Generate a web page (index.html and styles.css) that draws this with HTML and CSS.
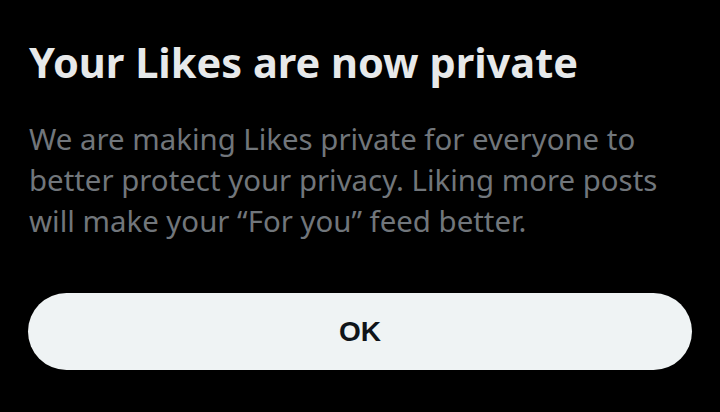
FILE: index.html
```html
<!DOCTYPE html>
<html>
<head>
<meta charset="utf-8">
<link rel="stylesheet" href="styles.css">
</head>
<body>
<div class="sheet">
  <h1 class="title">Your Likes are now private</h1>
  <p class="desc">We are making Likes private for everyone to better protect your privacy. Liking more posts will make your “For you” feed better.</p>
  <button class="ok">OK</button>
</div>
</body>
</html>
```
FILE: styles.css
```css
html, body {
  margin: 0;
  padding: 0;
  background: #000;
  height: 100%;
}
.sheet {
  display: flex;
  flex-direction: column;
  padding: 39px 28px 0 28px;
  font-family: "Noto Sans", "Open Sans", sans-serif;
}
.title {
  margin: 0;
  font-size: 41.5px;
  line-height: 46px;
  font-weight: 700;
  color: #e7e9ea;
  padding-left: 1px;
}
.desc {
  margin: 34px 0 0 0;
  font-size: 29.4px;
  line-height: 41px;
  color: #71767b;
  padding-left: 1px;
}
.ok {
  margin-top: 51px;
  height: 77px;
  width: 100%;
  border: none;
  border-radius: 40px;
  background: #eff3f4;
  color: #0f1419;
  font-family: "Liberation Sans", Arial, sans-serif;
  font-weight: 700;
  font-size: 28px;
  padding: 0;
}
```
